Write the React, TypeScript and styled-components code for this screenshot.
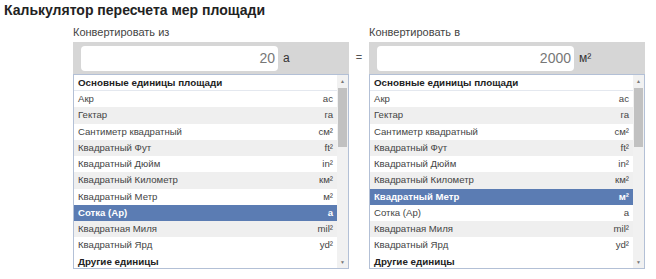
import styled, { createGlobalStyle } from "styled-components";

type Unit = { name: string; abbr: string; striped?: boolean };

const units: Unit[] = [
  { name: "Акр", abbr: "ac" },
  { name: "Гектар", abbr: "га", striped: true },
  { name: "Сантиметр квадратный", abbr: "см²" },
  { name: "Квадратный Фут", abbr: "ft²", striped: true },
  { name: "Квадратный Дюйм", abbr: "in²" },
  { name: "Квадратный Километр", abbr: "км²", striped: true },
  { name: "Квадратный Метр", abbr: "м²" },
  { name: "Сотка (Ар)", abbr: "а" },
  { name: "Квадратная Миля", abbr: "mil²", striped: true },
  { name: "Квадратный Ярд", abbr: "yd²" },
];

const GlobalStyle = createGlobalStyle`
  body {
    margin: 0;
    background: #ffffff;
    font-family: "Liberation Sans", Arial, sans-serif;
    color: #222;
  }
`;

const Converter = ({
  label,
  value,
  unit,
  selected,
}: {
  label: string;
  value: string;
  unit: string;
  selected: string;
}) => (
  <Column>
    <Label>{label}</Label>
    <InputBar>
      <ValueBox>{value}</ValueBox>
      <UnitLabel>{unit}</UnitLabel>
    </InputBar>
    <ListBox>
      <Options>
        <GroupHead>Основные единицы площади</GroupHead>
        {units.map((u) => (
          <Option
            key={u.name}
            $striped={!!u.striped}
            $selected={u.name === selected}
          >
            <span>{u.name}</span>
            <span>{u.abbr}</span>
          </Option>
        ))}
        <GroupHead>Другие единицы</GroupHead>
      </Options>
      <Scrollbar>
        <Arrow>▲</Arrow>
        <Track>
          <Thumb />
        </Track>
        <Arrow>▼</Arrow>
      </Scrollbar>
    </ListBox>
  </Column>
);

export default function App() {
  return (
    <>
      <GlobalStyle />
      <Page>
        <Title>Калькулятор пересчета мер площади</Title>
        <Panels>
          <Converter
            label="Конвертировать из"
            value="20"
            unit="а"
            selected="Сотка (Ар)"
          />
          <Equals>=</Equals>
          <Converter
            label="Конвертировать в"
            value="2000"
            unit="м²"
            selected="Квадратный Метр"
          />
        </Panels>
      </Page>
    </>
  );
}

const Page = styled.div`
  padding: 1px 0 0 4px;
`;

const Title = styled.h1`
  margin: 0;
  font-size: 14px;
  line-height: 18px;
  font-weight: 700;
  color: #222;
`;

const Panels = styled.div`
  display: flex;
  align-items: flex-start;
  margin: 6px 0 0 69px;
`;

const Column = styled.div`
  width: 276px;
  display: flex;
  flex-direction: column;
`;

const Label = styled.div`
  font-size: 11px;
  line-height: 14px;
  color: #444;
  margin-bottom: 3px;
`;

const InputBar = styled.div`
  display: flex;
  align-items: center;
  height: 32px;
  padding: 0 8px;
  background: #d6d6d6;
`;

const ValueBox = styled.div`
  width: 197px;
  height: 25px;
  box-sizing: border-box;
  padding: 0 3px;
  background: #fff;
  border-radius: 4px;
  text-align: right;
  font-size: 14px;
  line-height: 25px;
  color: #777;
`;

const UnitLabel = styled.span`
  margin-left: 5px;
  font-size: 12px;
  color: #333;
`;

const ListBox = styled.div`
  display: flex;
  height: 193px;
  border: 1px solid #b3c0d6;
  overflow: hidden;
  background: #fff;
`;

const Options = styled.div`
  flex: 1;
  overflow: hidden;
`;

const GroupHead = styled.div`
  height: 16px;
  line-height: 16px;
  padding: 0 4px;
  font-size: 9.8px;
  font-weight: 700;
  color: #222;
  border-bottom: 1px solid #e4e8ef;
  box-sizing: border-box;
`;

const Option = styled.div<{ $striped: boolean; $selected: boolean }>`
  display: flex;
  justify-content: space-between;
  height: 16.25px;
  line-height: 16px;
  padding: 0 4px;
  font-size: 9.6px;
  color: ${(p) => (p.$selected ? "#fff" : "#444")};
  font-weight: ${(p) => (p.$selected ? 700 : 400)};
  background: ${(p) =>
    p.$selected ? "#5b7cb3" : p.$striped ? "#efefef" : "#fff"};
`;

const Scrollbar = styled.div`
  width: 11px;
  display: flex;
  flex-direction: column;
  background: #f1f1f1;
`;

const Arrow = styled.div`
  height: 12px;
  font-size: 5px;
  line-height: 12px;
  text-align: center;
  color: #777;
`;

const Track = styled.div`
  flex: 1;
  padding: 1px 1px;
`;

const Thumb = styled.div`
  height: 59px;
  background: #c1c1c1;
`;

const Equals = styled.div`
  width: 20px;
  padding-top: 26px;
  text-align: center;
  font-size: 11px;
  color: #555;
`;
